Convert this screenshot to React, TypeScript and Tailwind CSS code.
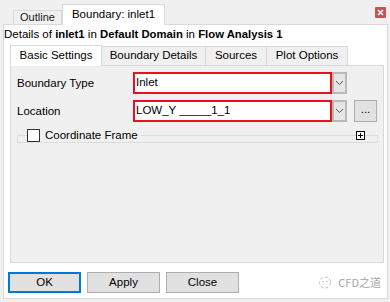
import React from "react";

const font = { fontFamily: "'Liberation Sans', Arial, 'Noto Sans CJK SC', sans-serif" };

function Chevron() {
  return (
    <svg width="9" height="6" viewBox="0 0 9 6">
      <path d="M1 1 L4.5 4.5 L8 1" fill="none" stroke="#555" strokeWidth="1" />
    </svg>
  );
}

function Combo({ value }: { value: string }) {
  return (
    <div className="flex h-[22px]">
      <div className="w-[199px] h-[22px] border-2 border-[#e81123] bg-white flex items-center pl-[1px] text-[11.5px] text-black whitespace-nowrap">
        {value}
      </div>
      <div className="w-[15px] h-[22px] border-2 border-[#b9b9b9] bg-[#e6e6e6] flex items-center justify-center">
        <Chevron />
      </div>
    </div>
  );
}

export default function App() {
  return (
    <div className="w-[390px] h-[302px] bg-[#f0f0f0] relative overflow-hidden text-black whitespace-nowrap text-[11px]" style={font}>
      {/* top tab bar */}
      <div className="h-[24px] flex items-end pl-[13px] relative">
        <div className="h-[14px] w-[49px] border border-b-0 border-[#d9d9d9] bg-[#f0f0f0] flex items-center justify-center text-[11px] text-[#1a1a1a]">
          Outline
        </div>
        <div className="h-[21px] w-[103px] -mb-px border border-b-0 border-[#d9d9d9] bg-white flex items-center justify-center text-[11.5px] relative z-10">
          Boundary: inlet1
        </div>
        <div className="absolute left-[375px] top-[7px] w-[11px] h-[11px] bg-[#c75050] rounded-[1px] flex items-center justify-center">
          <svg width="7" height="7" viewBox="0 0 7 7">
            <path d="M1 1 L6 6 M6 1 L1 6" stroke="#fff" strokeWidth="1.6" />
          </svg>
        </div>
      </div>
      {/* white panel */}
      <div className="ml-[3px] mr-[2px] h-[275px] bg-white border border-[#d9d9d9] flex flex-col">
        <div className="h-[19px] flex items-center pl-[0px] text-[11.5px] whitespace-nowrap">
          <span>Details of&nbsp;</span>
          <b className="text-[11.3px]">inlet1</b>
          <span>&nbsp;in&nbsp;</span>
          <b className="text-[11.3px]">Default Domain</b>
          <span>&nbsp;in&nbsp;</span>
          <b className="text-[11.3px]">Flow Analysis 1</b>
        </div>
        {/* inner tabs */}
        <div className="h-[21px] flex items-end pl-[6px]">
          <div className="h-[21px] w-[92px] -mb-px border border-b-0 border-[#d9d9d9] bg-white flex items-center justify-center text-[11.5px] relative z-10">
            Basic Settings
          </div>
          <div className="h-[19px] w-[104px] border border-l-0 border-b-0 border-[#d9d9d9] bg-[#f0f0f0] flex items-center justify-center text-[11.5px]">
            Boundary Details
          </div>
          <div className="h-[19px] w-[61px] border border-l-0 border-b-0 border-[#d9d9d9] bg-[#f0f0f0] flex items-center justify-center text-[11.5px]">
            Sources
          </div>
          <div className="h-[19px] w-[81px] border border-l-0 border-b-0 border-[#d9d9d9] bg-[#f0f0f0] flex items-center justify-center text-[11.5px]">
            Plot Options
          </div>
        </div>
        {/* content */}
        <div className="ml-[6px] mr-[3px] h-[198px] bg-[#f0f0f0] border border-[#d9d9d9] flex flex-col pt-[6px] pl-[6px] text-[11.5px]">
          <div className="flex items-center h-[22px]">
            <div className="w-[116px] pt-[2px]">Boundary Type</div>
            <Combo value="Inlet" />
          </div>
          <div className="flex items-center h-[22px] mt-[6px]">
            <div className="w-[116px] pt-[2px]">Location</div>
            <Combo value="LOW_Y _____1_1" />
            <div className="ml-[7px] w-[23px] h-[22px] border border-[#adadad] bg-[#e1e1e1] flex items-center justify-center pb-[3px]">
              ...
            </div>
          </div>
          <div className="relative h-[14px] mt-[7px] mr-[5px]">
            <div className="absolute left-0 right-0 top-[6px] h-[8px] border border-[#dcdcdc]" />
            <div className="absolute left-[10px] top-0 flex items-center bg-[#f0f0f0] pl-[0px] pr-[3px]">
              <div className="w-[13px] h-[13px] border border-[#333] bg-white" />
              <span className="ml-[5px] leading-[13px]">Coordinate Frame</span>
            </div>
            <div className="absolute left-[339px] top-[2px] w-[9px] h-[9px] border border-black bg-white flex items-center justify-center">
              <svg width="7" height="7" viewBox="0 0 7 7">
                <path d="M3.5 1 V6 M1 3.5 H6" stroke="#000" strokeWidth="1" />
              </svg>
            </div>
          </div>
        </div>
        {/* buttons */}
        <div className="flex items-center pl-[4px] mt-[9px] gap-[6px] relative text-[11.5px]">
          <div className="w-[73px] h-[21px] border-2 border-[#0078d7] bg-[#e1e1e1] flex items-center justify-center">
            OK
          </div>
          <div className="w-[73px] h-[21px] border border-[#adadad] bg-[#e1e1e1] flex items-center justify-center">
            Apply
          </div>
          <div className="w-[73px] h-[21px] border border-[#adadad] bg-[#e1e1e1] flex items-center justify-center">
            Close
          </div>
          <div className="ml-auto mr-[6px] flex items-center gap-[6px] text-[#a5a5a5]">
            <svg width="14" height="13" viewBox="0 0 14 13">
              <circle cx="7" cy="6.5" r="5.5" fill="none" stroke="#bdbdbd" strokeWidth="1" strokeDasharray="3 2" />
              <path d="M4 6 Q5 4.5 6 6 M8 6 Q9 4.5 10 6" fill="none" stroke="#bdbdbd" strokeWidth="0.8" />
            </svg>
            <span className="text-[11px]" style={{ fontFamily: "'Noto Sans CJK SC', sans-serif" }}>CFD之道</span>
          </div>
        </div>
      </div>
    </div>
  );
}
